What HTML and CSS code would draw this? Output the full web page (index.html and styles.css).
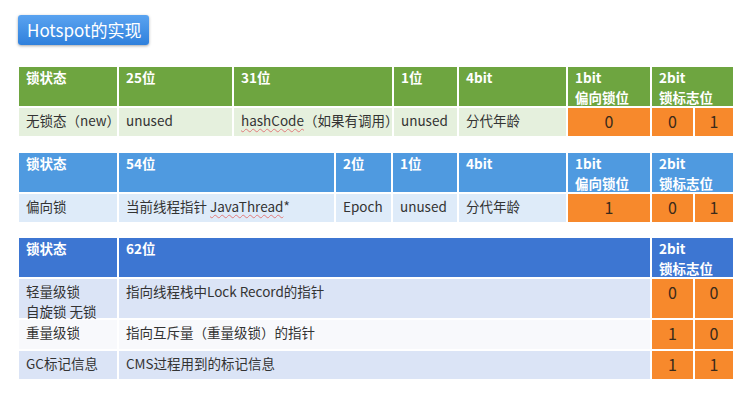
FILE: index.html
```html
<!DOCTYPE html>
<html lang="zh-CN">
<head>
<meta charset="utf-8">
<title>Hotspot的实现</title>
<link rel="stylesheet" href="styles.css">
</head>
<body>
<div class="page">
  <div class="title">Hotspot的实现</div>

  <div class="tbl t1">
    <div class="h">锁状态</div>
    <div class="h">25位</div>
    <div class="h">31位</div>
    <div class="h">1位</div>
    <div class="h">4bit</div>
    <div class="h">1bit<br>偏向锁位</div>
    <div class="h span2">2bit<br>锁标志位</div>
    <div class="c">无锁态（new）</div>
    <div class="c">unused</div>
    <div class="c"><span class="sq">hashCode</span>（如果有调用）</div>
    <div class="c">unused</div>
    <div class="c">分代年龄</div>
    <div class="o">0</div>
    <div class="o">0</div>
    <div class="o">1</div>
  </div>

  <div class="tbl t2">
    <div class="h">锁状态</div>
    <div class="h">54位</div>
    <div class="h">2位</div>
    <div class="h">1位</div>
    <div class="h">4bit</div>
    <div class="h">1bit<br>偏向锁位</div>
    <div class="h span2">2bit<br>锁标志位</div>
    <div class="c">偏向锁</div>
    <div class="c">当前线程指针 <span class="sq">JavaThread</span>*</div>
    <div class="c">Epoch</div>
    <div class="c">unused</div>
    <div class="c">分代年龄</div>
    <div class="o">1</div>
    <div class="o">0</div>
    <div class="o">1</div>
  </div>

  <div class="tbl t3">
    <div class="h">锁状态</div>
    <div class="h">62位</div>
    <div class="h span2">2bit<br>锁标志位</div>
    <div class="c">轻量级锁<br>自旋锁 无锁</div>
    <div class="c">指向线程栈中Lock Record的指针</div>
    <div class="o">0</div>
    <div class="o">0</div>
    <div class="c w">重量级锁</div>
    <div class="c w">指向互斥量（重量级锁）的指针</div>
    <div class="o">1</div>
    <div class="o">0</div>
    <div class="c">GC标记信息</div>
    <div class="c">CMS过程用到的标记信息</div>
    <div class="o">1</div>
    <div class="o">1</div>
  </div>
</div>
</body>
</html>
```

FILE: styles.css
```css
html, body {
  margin: 0;
  padding: 0;
  background: #ffffff;
}

body {
  font-family: "Noto Sans CJK SC", "Noto Sans", sans-serif;
  color: #333333;
}

.page {
  padding: 15px 12px 0 19px;
}

.title {
  display: inline-block;
  margin-left: -1px;
  height: 30px;
  box-sizing: border-box;
  padding: 0 8px 0 9px;
  font-size: 17px;
  line-height: 30px;
  color: #ffffff;
  background: linear-gradient(#5aa3f0, #2f80dc);
  border-radius: 3px;
  box-shadow: 0 1px 3px rgba(0, 0, 0, 0.35);
}

.tbl {
  display: grid;
  gap: 2px;
  width: 714px;
  margin-top: 17px;
}

.t1 {
  margin-top: 22px;
  grid-template-columns: 98px 113px 158px 63px 107px 82px 41px 38px;
  grid-template-rows: 39px 28px;
}

.t2 {
  grid-template-columns: 98px 215px 55px 64px 107px 82px 41px 38px;
  grid-template-rows: 39px 28px;
}

.t3 {
  margin-top: 16px;
  grid-template-columns: 98px 531px 41px 38px;
  grid-template-rows: 39px 39px 29px 28px;
}

.span2 {
  grid-column: span 2;
}

.h {
  padding: 1px 7px 0 7px;
  font-size: 13.5px;
  line-height: 19.6px;
  font-weight: bold;
  color: #ffffff;
}

.c {
  padding: 3px 7px 0 7px;
  font-size: 13.5px;
  line-height: 19.6px;
  color: #333333;
  white-space: nowrap;
}

.o {
  padding-top: 2px;
  font-size: 16px;
  line-height: 23.2px;
  text-align: center;
  color: #3a2a1a;
  background: #f7892c;
}

.t1 .h { background: #6ea540; }
.t1 .c { background: #e5f0dd; }

.t2 .h { background: #4f9ae0; }
.t2 .c { background: #deebf9; }

.t3 .h { background: #3d76d2; }
.t3 .c { background: #dbe4f6; }
.t3 .c.w { background: #f8f9fc; }

.sq {
  text-decoration: underline wavy #e27b7b;
  text-decoration-thickness: 1px;
  text-underline-offset: 2px;
}
```
